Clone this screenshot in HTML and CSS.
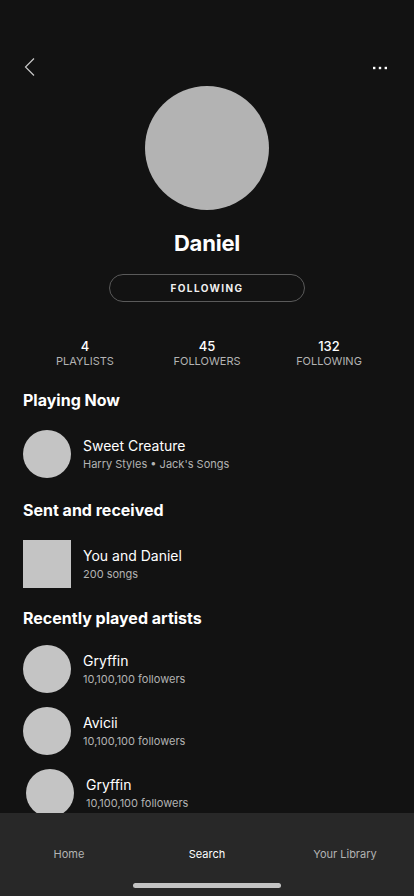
FILE: index.html
```html
<!DOCTYPE html>
<html lang="en">
<head>
<meta charset="utf-8">
<title>Daniel</title>
<link rel="stylesheet" href="styles.css">
</head>
<body>
<div class="page">
  <div class="topbar">
    <svg class="back" width="12" height="20" viewBox="0 0 12 20"><polyline points="10,1.5 1.5,10 10,18.5" fill="none" stroke="#c8c8c8" stroke-width="1.2"/></svg>
    <svg class="more" width="16" height="4" viewBox="0 0 16 4"><rect x="1" y="0.8" width="2.4" height="2.4" fill="#fff"/><rect x="6.8" y="0.8" width="2.4" height="2.4" fill="#fff"/><rect x="12.6" y="0.8" width="2.4" height="2.4" fill="#fff"/></svg>
  </div>
  <div class="profile">
    <div class="avatar"></div>
    <h1 class="name">Daniel</h1>
    <div class="follow-btn">FOLLOWING</div>
  </div>
  <div class="stats">
    <div class="stat"><div class="num">4</div><div class="lbl">PLAYLISTS</div></div>
    <div class="stat"><div class="num">45</div><div class="lbl">FOLLOWERS</div></div>
    <div class="stat"><div class="num">132</div><div class="lbl">FOLLOWING</div></div>
  </div>

  <h2 class="section-title first">Playing Now</h2>
  <div class="row">
    <div class="thumb round"></div>
    <div class="info"><div class="title">Sweet Creature</div><div class="sub">Harry Styles • Jack's Songs</div></div>
  </div>

  <h2 class="section-title second">Sent and received</h2>
  <div class="row">
    <div class="thumb"></div>
    <div class="info"><div class="title">You and Daniel</div><div class="sub">200 songs</div></div>
  </div>

  <h2 class="section-title">Recently played artists</h2>
  <div class="artists">
    <div class="row">
      <div class="thumb round"></div>
      <div class="info"><div class="title">Gryffin</div><div class="sub">10,100,100 followers</div></div>
    </div>
    <div class="row">
      <div class="thumb round"></div>
      <div class="info"><div class="title">Avicii</div><div class="sub">10,100,100 followers</div></div>
    </div>
    <div class="row shifted">
      <div class="thumb round"></div>
      <div class="info"><div class="title">Gryffin</div><div class="sub">10,100,100 followers</div></div>
    </div>
  </div>
</div>

<nav class="tabbar">
  <div class="tab">Home</div>
  <div class="tab active">Search</div>
  <div class="tab">Your Library</div>
  <div class="home-indicator"></div>
</nav>
</body>
</html>
```

FILE: styles.css
```css
* { box-sizing: border-box; }
html, body { margin: 0; padding: 0; }
body {
  background: #121212;
  color: #fff;
  font-family: Inter, "Noto Sans", "Liberation Sans", sans-serif;
  width: 414px;
  height: 896px;
  overflow: hidden;
  position: relative;
}
.page { padding-top: 52px; }
.topbar {
  height: 28px;
  display: flex;
  align-items: center;
  justify-content: space-between;
  padding: 0 26px 0 24px;
}
.back { margin-top: 1px; }
.more { margin-top: 3px; }
.profile {
  display: flex;
  flex-direction: column;
  align-items: center;
  margin-top: 6px;
}
.avatar {
  width: 124px;
  height: 124px;
  border-radius: 50%;
  background: #b3b3b3;
}
.name {
  margin: 19px 0 0;
  font-size: 22px;
  line-height: 28px;
  font-weight: 700;
  letter-spacing: -0.2px;
}
.follow-btn {
  margin-top: 17px;
  width: 196px;
  height: 28px;
  border: 1px solid #5a5a5a;
  border-radius: 14px;
  display: flex;
  align-items: center;
  justify-content: center;
  font-size: 10px;
  font-weight: 700;
  letter-spacing: 1.4px;
  color: #f0f0f0;
}
.stats {
  margin-top: 37px;
  display: grid;
  grid-template-columns: repeat(3, 1fr);
  padding: 0 24px;
  text-align: center;
}
.num {
  font-size: 13px;
  line-height: 15px;
  font-weight: 500;
  color: #fff;
}
.lbl {
  font-size: 11px;
  line-height: 14px;
  color: #b3b3b3;
}
.section-title {
  margin: 20px 0 0;
  padding-left: 23px;
  font-size: 16px;
  line-height: 20px;
  font-weight: 700;
}
.section-title.first,
.section-title.second { margin-top: 22px; }
.row {
  display: flex;
  align-items: center;
  gap: 12px;
  padding-left: 23px;
  margin-top: 20px;
}
.artists { margin-top: 17px; display: flex; flex-direction: column; gap: 14px; }
.artists .row { margin-top: 0; }
.row.shifted { padding-left: 26px; }
.thumb {
  width: 48px;
  height: 48px;
  background: #c4c4c4;
  flex: none;
}
.thumb.round { border-radius: 50%; }
.info { display: flex; flex-direction: column; gap: 2px; }
.title {
  font-size: 14px;
  line-height: 18px;
  color: #fff;
}
.sub {
  font-size: 11px;
  line-height: 14px;
  color: #b3b3b3;
}
.tabbar {
  position: fixed;
  left: 0;
  bottom: 0;
  width: 414px;
  height: 83px;
  background: #282828;
  display: grid;
  grid-template-columns: repeat(3, 1fr);
  align-items: start;
  padding-top: 33px;
}
.tab {
  text-align: center;
  font-size: 11px;
  line-height: 16px;
  color: #b3b3b3;
}
.tab.active { color: #fff; }
.home-indicator {
  position: absolute;
  left: 133px;
  top: 70px;
  width: 148px;
  height: 5px;
  border-radius: 3px;
  background: #c4c4c4;
}
```
